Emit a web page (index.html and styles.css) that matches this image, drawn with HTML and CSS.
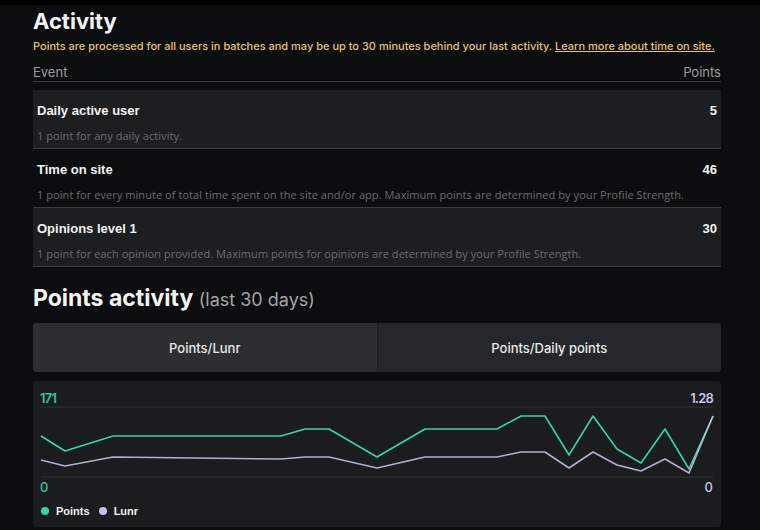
FILE: index.html
```html
<!DOCTYPE html>
<html lang="en">
<head>
<meta charset="utf-8">
<title>Activity</title>
<link rel="stylesheet" href="styles.css">
</head>
<body>
<div class="band"></div>
<main class="page">
  <h1 class="title">Activity</h1>
  <p class="notice">Points are processed for all users in batches and may be up to 30 minutes behind your last activity. <a href="#" class="notice-link">Learn more about time on site.</a></p>

  <div class="table-head">
    <span>Event</span>
    <span>Points</span>
  </div>

  <div class="rows">
    <div class="row row-shaded">
      <div class="row-top">
        <span class="row-title">Daily active user</span>
        <span class="row-value">5</span>
      </div>
      <div class="row-desc">1 point for any daily activity.</div>
    </div>
    <div class="row">
      <div class="row-top">
        <span class="row-title">Time on site</span>
        <span class="row-value">46</span>
      </div>
      <div class="row-desc">1 point for every minute of total time spent on the site and/or app. Maximum points are determined by your Profile Strength.</div>
    </div>
    <div class="row row-shaded">
      <div class="row-top">
        <span class="row-title">Opinions level 1</span>
        <span class="row-value">30</span>
      </div>
      <div class="row-desc">1 point for each opinion provided. Maximum points for opinions are determined by your Profile Strength.</div>
    </div>
  </div>

  <h2 class="subtitle">Points activity <span class="subtitle-note">(last 30 days)</span></h2>

  <div class="tabs">
    <button class="tab tab-active">Points/Lunr</button>
    <button class="tab">Points/Daily points</button>
  </div>

  <section class="chart-card">
    <div class="axis-row">
      <span class="axis-left">171</span>
      <span class="axis-right">1.28</span>
    </div>
    <svg class="chart" width="673" height="72" viewBox="0 0 673 72">
      <line x1="1" y1="1" x2="673" y2="1" class="grid"/>
      <line x1="1" y1="71" x2="673" y2="71" class="grid"/>
      <polyline class="line-points" points="1,30 25,45 73,30 241,30 265,23 289,23 337,51 385,23 457,23 481,10 505,10 529,49 553,10 577,43 601,57 625,23 649,63 673,10"/>
      <polyline class="line-lunr" points="1,54 25,60 73,51 241,53 265,51 289,51 337,62 385,51 457,51 481,46 505,46 529,62 553,46 577,59 601,65 625,53 649,67 673,10"/>
    </svg>
    <div class="axis-row axis-bottom">
      <span class="axis-left">0</span>
      <span class="axis-right">0</span>
    </div>
    <div class="legend">
      <span class="legend-item"><span class="dot dot-points"></span>Points</span>
      <span class="legend-item"><span class="dot dot-lunr"></span>Lunr</span>
    </div>
  </section>
</main>
</body>
</html>
```

FILE: styles.css
```css
html, body {
  margin: 0;
  padding: 0;
}

body {
  background: #0c0d0f;
  color: #f0f0f0;
  font-family: Inter, "Liberation Sans", sans-serif;
  width: 760px;
  height: 530px;
  overflow: hidden;
}

.band {
  height: 5px;
  background: #000;
}

.page {
  margin-left: 33px;
  width: 688px;
  padding-top: 3px;
}

.title {
  margin: 0;
  font-size: 22px;
  line-height: 26px;
  font-weight: 700;
  color: #f4f4f4;
}

.notice {
  margin: 5px 0 0;
  font-size: 11px;
  line-height: 14px;
  font-weight: 500;
  color: #e6c36c;
  white-space: nowrap;
}

.notice-link {
  color: #e6c36c;
  text-decoration: underline;
}

.table-head {
  margin-top: 10px;
  display: flex;
  justify-content: space-between;
  font-size: 13px;
  line-height: 18px;
  color: #9c9c9c;
  border-bottom: 1px solid #3a3b3d;
}

.rows {
  margin-top: 8px;
}

.row {
  height: 59px;
  box-sizing: border-box;
  padding: 12px 4px 0;
  border-bottom: 1px solid #3a3b3d;
}

.row-shaded {
  background: #1c1e20;
}

.row-top {
  display: flex;
  justify-content: space-between;
  font-family: "Liberation Sans", Arial, sans-serif;
  font-weight: 700;
  font-size: 13px;
  line-height: 18px;
  color: #f2f2f2;
}

.row-desc {
  margin-top: 9px;
  font-family: "Open Sans", sans-serif;
  font-size: 11px;
  line-height: 14px;
  letter-spacing: 0.06px;
  color: #6b6d70;
  white-space: nowrap;
}

.subtitle {
  margin: 16px 0 0;
  font-size: 23px;
  line-height: 30px;
  font-weight: 700;
  color: #f4f4f4;
}

.subtitle-note {
  font-size: 18px;
  font-weight: 400;
  color: #a4a4a6;
}

.tabs {
  margin-top: 8px;
  display: flex;
  height: 49px;
  border-radius: 4px;
  overflow: hidden;
  background: #25282a;
}

.tab {
  flex: 1;
  border: 0;
  margin: 0;
  padding: 0;
  background: #25282a;
  color: #e8e8e8;
  font-family: Inter, "Liberation Sans", sans-serif;
  font-size: 13px;
  font-weight: 500;
  cursor: pointer;
}

.tab-active {
  background: #2d2e30;
  border-right: 1px solid #1e2022;
}

.chart-card {
  margin-top: 9px;
  height: 146px;
  box-sizing: border-box;
  background: #1b1c1e;
  border-radius: 4px;
  padding: 9px 8px 0 7px;
}

.axis-row {
  display: flex;
  justify-content: space-between;
  font-size: 13px;
  line-height: 16px;
  font-weight: 600;
  letter-spacing: -0.8px;
}

.axis-left {
  color: #2ec99b;
}

.axis-right {
  color: #c8c3ea;
}

.axis-bottom {
  margin-top: 1px;
  font-weight: 500;
  letter-spacing: 0;
}

.chart {
  display: block;
  overflow: visible;
}

.grid {
  stroke: #333538;
  stroke-width: 1;
}

.line-points {
  fill: none;
  stroke: #34d6a5;
  stroke-width: 1.6;
  stroke-linejoin: round;
}

.line-lunr {
  fill: none;
  stroke: #c8c3ea;
  stroke-width: 1.6;
  stroke-linejoin: round;
  opacity: 0.88;
}

.legend {
  margin-top: 8px;
  display: flex;
  gap: 9px;
  padding-left: 1px;
  font-family: "Liberation Sans", Arial, sans-serif;
  font-size: 11px;
  line-height: 16px;
  font-weight: 700;
  color: #ececec;
}

.legend-item {
  display: flex;
  align-items: center;
  gap: 7px;
}

.dot {
  width: 8px;
  height: 8px;
  border-radius: 50%;
}

.dot-points {
  background: #2fd6a4;
}

.dot-lunr {
  background: #c4bfe6;
}
```
